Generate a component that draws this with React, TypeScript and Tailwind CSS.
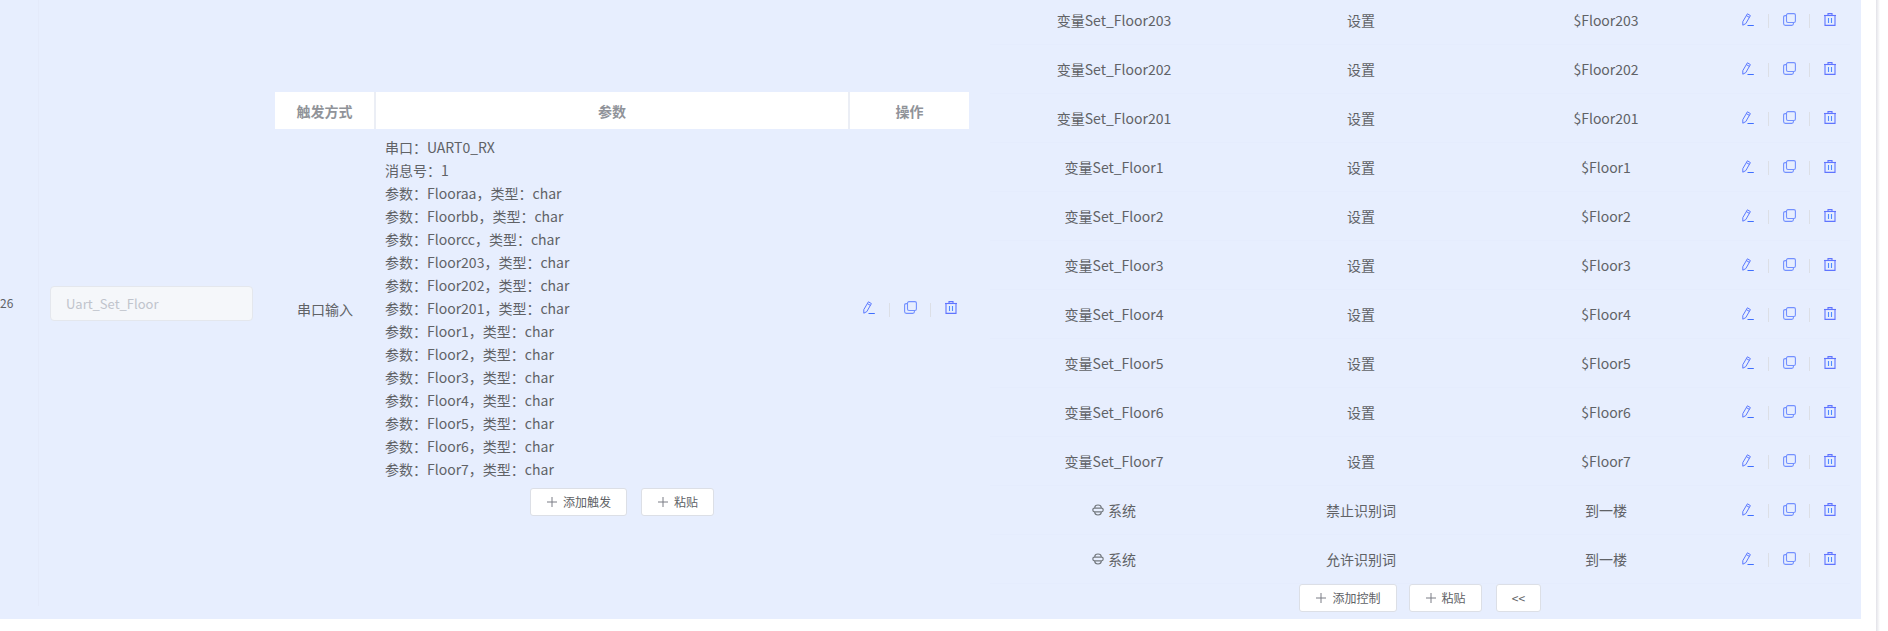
const font = 'font-["Noto_Sans_CJK_SC","Noto_Sans",sans-serif]';

const params = [
  '串口：UART0_RX',
  '消息号：1',
  '参数：Flooraa，类型：char',
  '参数：Floorbb，类型：char',
  '参数：Floorcc，类型：char',
  '参数：Floor203，类型：char',
  '参数：Floor202，类型：char',
  '参数：Floor201，类型：char',
  '参数：Floor1，类型：char',
  '参数：Floor2，类型：char',
  '参数：Floor3，类型：char',
  '参数：Floor4，类型：char',
  '参数：Floor5，类型：char',
  '参数：Floor6，类型：char',
  '参数：Floor7，类型：char',
];

const rows = [
  ['变量Set_Floor203', '设置', '$Floor203'],
  ['变量Set_Floor202', '设置', '$Floor202'],
  ['变量Set_Floor201', '设置', '$Floor201'],
  ['变量Set_Floor1', '设置', '$Floor1'],
  ['变量Set_Floor2', '设置', '$Floor2'],
  ['变量Set_Floor3', '设置', '$Floor3'],
  ['变量Set_Floor4', '设置', '$Floor4'],
  ['变量Set_Floor5', '设置', '$Floor5'],
  ['变量Set_Floor6', '设置', '$Floor6'],
  ['变量Set_Floor7', '设置', '$Floor7'],
  ['系统', '禁止识别词', '到一楼'],
  ['系统', '允许识别词', '到一楼'],
];

function EditIcon() {
  return (
    <svg width="12" height="13" viewBox="0 0 12 13" fill="none" stroke="#5a78ff" strokeWidth="1">
      <path d="M0.8 12.2L0.8 8.6L5.4 0.8L8.4 2.6L3.8 10.6Z" />
      <path d="M4.4 2.6L7.4 4.4" />
      <path d="M5.5 12.5H11.8" stroke="#3f6fff" />
    </svg>
  );
}

function CopyIcon() {
  return (
    <svg width="13" height="13" viewBox="0 0 13 13" fill="none" stroke="#7390ff" strokeWidth="1.1">
      <rect x="3.5" y="0.6" width="8.9" height="8.9" rx="1.5" />
      <path d="M3.4 2.6H2.2Q0.6 2.6 0.6 4.2V10.6Q0.6 12.4 2.4 12.4H8.8Q10.4 12.4 10.4 10.8V9.6" />
    </svg>
  );
}

function TrashIcon() {
  return (
    <svg width="12" height="13" viewBox="0 0 12 13" fill="none" stroke="#5f74ff" strokeWidth="1.1">
      <path d="M0 2.5H12" />
      <path d="M4 2.5V0.6H8V2.5" />
      <path d="M1 2.5V12.4H11V2.5" />
      <path d="M4.5 5V10M7.5 5V10" stroke="#4f8cff" />
    </svg>
  );
}

function SystemIcon() {
  return (
    <svg width="12" height="12" viewBox="0 0 12 12" fill="none" stroke="#74797f" strokeWidth="1.2">
      <path d="M2.8 4V3.4Q2.8 1 6 1Q9.2 1 9.2 3.4V4" />
      <path d="M2.8 8V8.6Q2.8 11 6 11Q9.2 11 9.2 8.6V8" />
      <rect x="0.8" y="4.2" width="10.4" height="3.6" rx="1.8" />
    </svg>
  );
}

function PlusIcon() {
  return (
    <svg width="10" height="10" viewBox="0 0 10 10" stroke="#7a7d85" strokeWidth="1">
      <path d="M5 0V10M0 5H10" />
    </svg>
  );
}

function Actions() {
  return (
    <div className="flex items-center justify-center pb-[2px] pl-[2px]">
      <span className="flex w-[14px] justify-center"><EditIcon /></span>
      <span className="mx-[13px] mt-[4px] h-[14px] w-px bg-[#dcdfe6]" />
      <span className="flex w-[14px] justify-center"><CopyIcon /></span>
      <span className="mx-[13px] mt-[4px] h-[14px] w-px bg-[#dcdfe6]" />
      <span className="flex w-[14px] justify-center"><TrashIcon /></span>
    </div>
  );
}

function Btn({ label, plus, className }: { label: string; plus?: boolean; className?: string }) {
  return (
    <button className={`flex h-[28px] items-center justify-center gap-[6px] rounded-[3px] border border-[#dcdfe6] bg-white pl-[16px] pr-[15px] text-xs text-[#606266] ${className ?? ''}`}>
      {plus && <PlusIcon />}
      {label}
    </button>
  );
}

export default function App() {
  return (
    <div className={`${font} flex h-[631px] w-full items-start overflow-hidden bg-white text-sm text-[#606266]`}>
      <div className="flex h-[619px] w-[1861px] shrink-0 overflow-hidden bg-[#e7eefe]">
        <div className="flex h-[606px] w-[39px] items-center border-r border-[#e4eafa] text-xs">
          <span>26</span>
        </div>
        <div className="flex h-[606px] w-[236px] items-center pl-[11px]">
          <input
            disabled
            placeholder="Uart_Set_Floor"
            className="h-[35px] w-[203px] rounded border border-[#e4e7ed] bg-[#f5f7fa] px-[15px] text-[13px] text-[#c0c4cc] placeholder:text-[#c0c4cc]"
          />
        </div>
        <div className="w-[694px] pt-[92px]">
          <div className="flex h-[37px] bg-white font-bold text-[#909399]">
            <div className="flex w-[101px] items-center justify-center border-r-2 border-[#ebeef5]">触发方式</div>
            <div className="flex w-[474px] items-center justify-center border-r-2 border-[#ebeef5]">参数</div>
            <div className="flex w-[119px] items-center justify-center">操作</div>
          </div>
          <div className="flex h-[359px] items-center">
            <div className="w-[100px] text-center">串口输入</div>
            <div className="w-[474px] px-[10px] leading-[23px]">
              {params.map((p, i) => (
                <div key={i}>{p}</div>
              ))}
            </div>
            <div className="w-[120px]"><Actions /></div>
          </div>
          <div className="flex justify-center gap-[14px]">
            <Btn label="添加触发" plus />
            <Btn label="粘贴" plus />
          </div>
        </div>
        <div className="ml-[21px] w-[860px] -mt-[4px]">
          {rows.map((r, i) => (
            <div key={i} className="flex h-[49px] items-center border-b border-[#e5ecfd]">
              <div className="flex w-[248px] items-center justify-center gap-[4px]">
                {r[0] === '系统' && <SystemIcon />}
                {r[0]}
              </div>
              <div className="w-[246px] text-center">{r[1]}</div>
              <div className="w-[244px] text-center">{r[2]}</div>
              <div className="w-[120px]"><Actions /></div>
            </div>
          ))}
          <div className="flex justify-center gap-[12px]">
            <Btn label="添加控制" plus />
            <Btn label="粘贴" plus />
            <Btn label="<<" className="ml-[2px] w-[45px]" />
          </div>
        </div>
      </div>
      <div className="ml-[15px] h-full w-[4px] shrink-0 bg-gradient-to-r from-[#e2e2e8] to-white" />
    </div>
  );
}
